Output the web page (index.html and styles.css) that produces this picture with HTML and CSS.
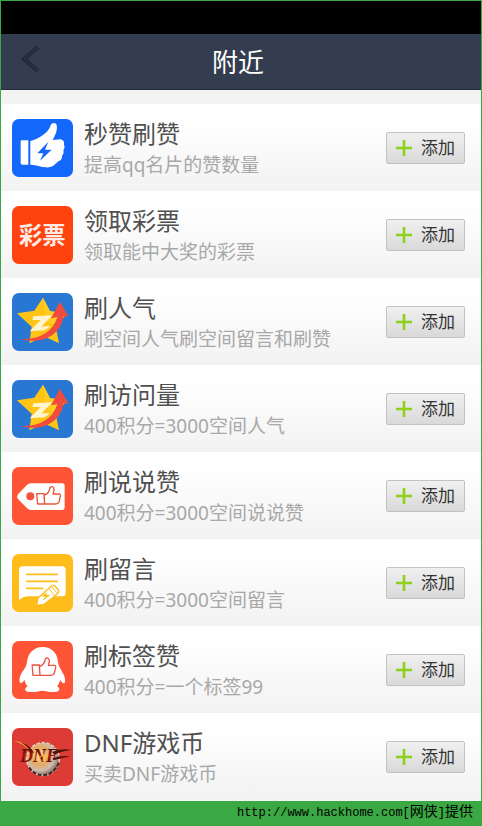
FILE: index.html
```
<!DOCTYPE html>
<html lang="zh-CN">
<head>
<meta charset="utf-8">
<meta name="viewport" content="width=device-width, initial-scale=1">
<title>附近</title>
<link rel="stylesheet" href="styles.css">
</head>
<body>
<svg class="defs" aria-hidden="true">
    <symbol id="plus" viewBox="0 0 16 16"><path d="M8 0v16M0 8h16" stroke="#8fd01c" stroke-width="2.6" fill="none"/></symbol>
    <symbol id="star" viewBox="0 0 183 174">
        <path d="M93 14l21 41 51 6-34 40 10 50-45-21-44 21 7-50-44-40 52-8z" fill="#ffc414"/>
        <path d="M93 14l21 41 51 6-34 40-28-20z" fill="#ffce20"/>
        <path d="M26 138C85 139 122 118 136 72L117 76 144 26 170 72 155 69C148 120 98 158 26 138z" fill="#f04b3c"/>
        <path d="M64 70l57-3-32 33 26 0-17 12-45 3 33-34-25 0z" fill="#fff4d0"/>
    </symbol>
    <symbol id="thumb" viewBox="0 0 76 58">
        <path d="M2 24l22 0 2 31-21 0zM24 29C34 25 41 18 42 5 48 0 55 5 54 14L51 25 70 25C75 26 74 32 72 35L69 49C67 54 62 55 58 55L26 55z" fill="none" stroke="#e8553c" stroke-width="4" stroke-linejoin="round"/>
    </symbol>
</svg>

<div class="phone">
    <div class="statusbar"></div>
    <header class="titlebar">
        <button class="back" type="button" aria-label="返回">
            <svg viewBox="0 0 20 30"><path d="M17 3L3 15l14 12" fill="none" stroke="#1f2636" stroke-width="4"/><path d="M17 3L3 15l14 12" fill="none" stroke="#333c51" stroke-width="1"/></svg>
        </button>
        <h1>附近</h1>
    </header>

    <ul class="list">
        <li class="item">
            <svg class="icon blue" viewBox="0 0 183 174">
                <path d="M28 64h21v73H30Q26 137 26 130V70Q26 64 28 64z" fill="#fff"/>
                <path d="M55 66C82 59 107 43 115 22 118 10 132 9 134 19 137 34 130 49 122 63L146 61Q158 64 156 77 160 84 154 94 157 104 150 110 151 123 140 126L126 139Q118 146 103 145C84 144 72 136 55 137z" fill="#fff"/>
                <path d="M109 68L76 103 94 103 84 125 119 92 99 92z" fill="#1467fb"/>
            </svg>
            <div class="info"><h2>秒赞刷赞</h2><p>提高qq名片的赞数量</p></div>
            <button class="add" type="button"><svg><use href="#plus"/></svg>添加</button>
        </li>
        <li class="item">
            <svg class="icon orange" viewBox="0 0 183 174">
                <text class="lottery" x="91" y="115" text-anchor="middle">彩票</text>
            </svg>
            <div class="info"><h2>领取彩票</h2><p>领取能中大奖的彩票</p></div>
            <button class="add" type="button"><svg><use href="#plus"/></svg>添加</button>
        </li>
        <li class="item">
            <svg class="icon sky" viewBox="0 0 183 174"><use href="#star"/></svg>
            <div class="info"><h2>刷人气</h2><p>刷空间人气刷空间留言和刷赞</p></div>
            <button class="add" type="button"><svg><use href="#plus"/></svg>添加</button>
        </li>
        <li class="item">
            <svg class="icon sky" viewBox="0 0 183 174"><use href="#star"/></svg>
            <div class="info"><h2>刷访问量</h2><p>400积分=3000空间人气</p></div>
            <button class="add" type="button"><svg><use href="#plus"/></svg>添加</button>
        </li>
        <li class="item">
            <svg class="icon red" viewBox="0 0 183 174">
                <path d="M56 49H150Q158 49 158 57V121Q158 129 150 129H56Q50 129 44 122L18 96Q13 89 18 82L44 55Q50 49 56 49z" fill="#fff"/>
                <circle cx="55" cy="88" r="12" fill="#f4523a"/>
                <use href="#thumb" x="72" y="56" width="76" height="58"/>
            </svg>
            <div class="info"><h2>刷说说赞</h2><p>400积分=3000空间说说赞</p></div>
            <button class="add" type="button"><svg><use href="#plus"/></svg>添加</button>
        </li>
        <li class="item">
            <svg class="icon yellow" viewBox="0 0 183 174">
                <path d="M32 37H150Q161 37 161 48V116Q161 127 150 127H46Q33 128 21 138V48Q21 37 32 37z" fill="#fff"/>
                <path d="M44 61h92M44 82h92M44 103h48" stroke="#ffbd1c" stroke-width="5" stroke-linecap="round"/>
                <path d="M74 154L78 132 118 96Q124 92 130 97L139 108Q142 114 137 119L96 151z" fill="#fff" stroke="#ffbd1c" stroke-width="4" stroke-linejoin="round"/>
                <path d="M110 103l19 23M118 97l18 21M104 117l-13 9 12 0-9 11 18-13-12 0z" fill="#ffbd1c" stroke="#ffbd1c" stroke-width="3"/>
            </svg>
            <div class="info"><h2>刷留言</h2><p>400积分=3000空间留言</p></div>
            <button class="add" type="button"><svg><use href="#plus"/></svg>添加</button>
        </li>
        <li class="item">
            <svg class="icon red" viewBox="0 0 183 174">
                <path d="M92 18C119 18 136 37 138 62 140 78 146 82 154 99 162 114 160 127 156 127 151 127 147 119 144 117 143 126 139 132 135 136 148 144 142 153 128 153 112 154 100 149 92 149 82 149 73 154 55 153 38 153 34 144 47 136 42 132 39 124 38 117 34 120 30 128 26 126 20 121 22 108 29 96 37 83 43 78 45 62 48 37 65 18 92 18z" fill="#fff"/>
                <use href="#thumb" x="58" y="48" width="76" height="58"/>
            </svg>
            <div class="info"><h2>刷标签赞</h2><p>400积分=一个标签99</p></div>
            <button class="add" type="button"><svg><use href="#plus"/></svg>添加</button>
        </li>
        <li class="item">
            <svg class="icon crimson" viewBox="0 0 183 174">
                <defs>
                    <radialGradient id="disc" cx=".4" cy=".4" r=".65"><stop offset="0" stop-color="#ffe39a"/><stop offset=".4" stop-color="#e9a860"/><stop offset=".7" stop-color="#cdbcae"/><stop offset="1" stop-color="#75554c"/></radialGradient>
                    <linearGradient id="flame" x2="0" y2="1"><stop offset="0" stop-color="#2b0905"/><stop offset=".5" stop-color="#a81808"/><stop offset="1" stop-color="#3c0b06"/></linearGradient>
                </defs>
                <circle cx="93" cy="93" r="49" fill="url(#disc)"/>
                <circle cx="93" cy="93" r="49" fill="none" stroke="#e6ccb8" stroke-width="5" stroke-dasharray="10 5"/>
                <path d="M51 118Q70 145 99 141T143 100" fill="none" stroke="#3c2723" stroke-width="6" stroke-dasharray="12 5"/>
                <path d="M3 38Q45 40 66 78L58 74Q36 45 3 38z" fill="#f0a03c"/>
                <path d="M26 42Q58 54 66 76L57 72Q48 56 26 42z" fill="#5a1008"/>
                <text class="dnf" x="24" y="102" fill="url(#flame)">DNF</text>
                <path d="M120 72Q147 60 180 66 152 68 128 80zM122 90Q152 82 174 85L124 97z" fill="#541008"/>
                <path d="M82 90l14-12-3 20 15-17" fill="none" stroke="#ffc044" stroke-width="3"/>
            </svg>
            <div class="info"><h2>DNF游戏币</h2><p>买卖DNF游戏币</p></div>
            <button class="add" type="button"><svg><use href="#plus"/></svg>添加</button>
        </li>
    </ul>
</div>
<footer class="source">http://www.hackhome.com[<span>网侠</span>]<span>提供</span></footer>
</body>
</html>
```
FILE: styles.css
```
*{box-sizing:border-box;}
body{margin:0;background:#3aa843;font-family:"Noto Sans","Noto Sans CJK SC",sans-serif;}
h1,h2,p,ul{margin:0;padding:0;font-weight:normal;}
.defs{display:none;}
.phone{margin:0 1px;border-top:1px solid #3aa843;background:#f3f3f3;}
.statusbar{height:33px;background:#000;}
.titlebar{display:grid;grid-template-columns:60px 1fr 66px;align-items:center;height:56px;border-bottom:1px solid #272d3d;background:#343c4f;color:#fff;text-align:center;}
.titlebar h1{font-size:26px;line-height:36px;}
.back{height:50px;padding:0 0 5px;border:0;background:none;}
.back svg{display:block;width:20px;height:30px;margin:0 auto;}
.list{padding:14px 0 1px;list-style:none;}
.item{display:flex;align-items:center;height:87px;padding:0 16px 0 11px;background:linear-gradient(#fff,#fefefe 25%,#f2f2f2);}
.icon{flex:none;width:61px;height:58px;border-radius:7px;}
.blue{background:#1467fb;}
.orange{background:#ff430f;}
.sky{background:#2878d3;}
.red{background:#ff5436;}
.yellow{background:#ffbd1c;}
.crimson{background:#dc3c35;}
.lottery{fill:#ffece4;font-size:70px;font-weight:bold;}
.dnf{font-family:"Liberation Serif",serif;font-size:54px;font-style:italic;font-weight:bold;}
.info{flex:1;min-width:0;padding:3px 0 0 11px;}
.info h2{color:#505050;font-size:24px;line-height:32px;}
.info p{color:#a8a8a8;font-size:19px;line-height:30px;}
.add{display:flex;flex:none;align-items:center;justify-content:center;gap:9px;width:79px;height:32px;padding:0;border:1px solid #c2c2c2;border-radius:2px;background:linear-gradient(#f0f0f0,#d9d9d9);color:#333;font-family:inherit;font-size:17px;line-height:24px;}
.add svg{width:16px;height:16px;}
.source{height:25px;padding-right:9px;color:#000;font-family:"Liberation Mono","Noto Sans CJK SC",monospace;font-size:12px;line-height:22px;text-align:right;}
.source span{font-size:14px;}
```
